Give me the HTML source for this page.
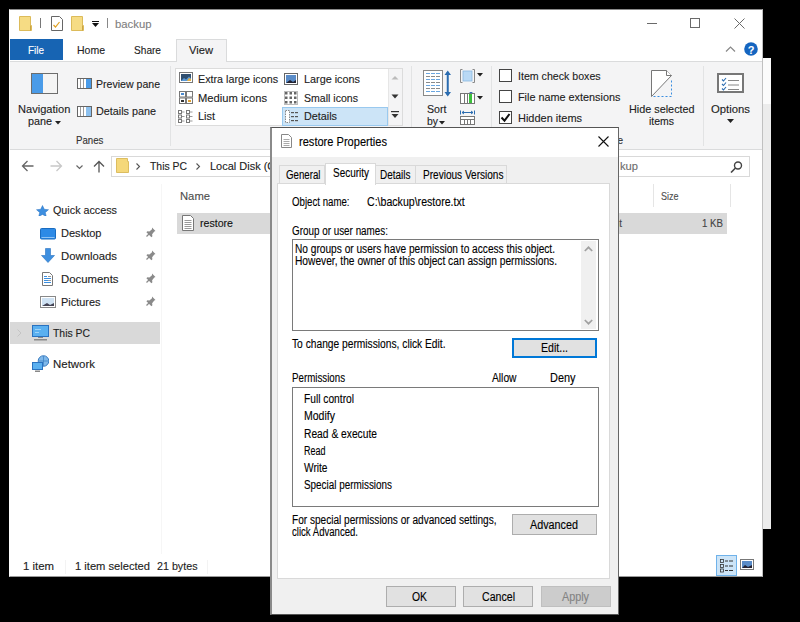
<!DOCTYPE html>
<html><head><meta charset="utf-8"><style>
html,body{margin:0;padding:0;}
body{width:800px;height:622px;background:#000;position:relative;overflow:hidden;font-family:"Liberation Sans",sans-serif;}
div{position:absolute;}
.t{white-space:nowrap;line-height:0;height:0;transform-origin:0 0;-webkit-text-stroke:0.12px currentColor;}
</style></head><body>
<div style="left:762px;top:58px;width:9px;height:471px;background:#ececec;border-left:1px solid #b8b8b8;box-sizing:border-box"></div>
<div style="left:763px;top:58px;width:8px;height:46px;background:#fbfbfb"></div>
<div style="left:9px;top:9px;width:754px;height:568px;background:#fff;border:1px solid #fdfdfd;border-top-color:#8a8a8a;border-right-color:#c0c0c0;border-bottom-color:#9a9a9a;box-sizing:border-box"></div>
<svg style="position:absolute;left:19px;top:16px;" width="14" height="15" viewBox="0 0 14 15"><path d="M0.5 0.5H11.5V9.5H12.5V14.5H0.5z" fill="#f6dc84" stroke="#dcbb5a"/><path d="M11.5 9.5v5" stroke="#c9a445"/></svg>
<div style="left:40px;top:18px;width:1px;height:10px;background:#777"></div>
<svg style="position:absolute;left:51px;top:16px;" width="12" height="15" viewBox="0 0 12 15"><path d="M0.5 0.5h8l3 3v11h-11z" fill="#fff" stroke="#666"/><path d="M2.5 9l2 2 4-5" fill="none" stroke="#e0a020" stroke-width="1.2"/></svg>
<svg style="position:absolute;left:71px;top:16px;" width="14" height="15" viewBox="0 0 14 15"><path d="M0.5 0.5H11.5V9.5H12.5V14.5H0.5z" fill="#f6dc84" stroke="#dcbb5a"/><path d="M11.5 9.5v5" stroke="#c9a445"/></svg>
<svg style="position:absolute;left:92px;top:21px;" width="7" height="6" viewBox="0 0 7 6"><rect x="0" y="0" width="7" height="1" fill="#111"/><path d="M0 2h7l-3.5 4z" fill="#111"/></svg>
<div style="left:107px;top:18px;width:1px;height:10px;background:#888"></div>
<div class="t" style="left:115px;top:24.02px;font-size:11.5px;color:#808080;transform:scaleX(0.9843);">backup</div>
<div style="left:647px;top:23px;width:10px;height:1px;background:#6a6a6a"></div>
<div style="left:690px;top:18px;width:10px;height:10px;border:1px solid #6a6a6a;box-sizing:border-box"></div>
<svg style="position:absolute;left:734px;top:18px;" width="11" height="11" viewBox="0 0 11 11"><path d="M0.5 0.5l10 10M10.5 0.5l-10 10" stroke="#6a6a6a" stroke-width="1"/></svg>
<div style="left:10px;top:61px;width:752px;height:1px;background:#dadbdc"></div>
<div style="left:10px;top:39px;width:53px;height:21px;background:#1764b3"></div>
<div class="t" style="left:28px;top:50.02px;font-size:11.5px;color:#fff;transform:scaleX(0.8634);">File</div>
<div class="t" style="left:77px;top:50.02px;font-size:11.5px;color:#222;transform:scaleX(0.9128);">Home</div>
<div class="t" style="left:134px;top:50.02px;font-size:11.5px;color:#222;transform:scaleX(0.8798);">Share</div>
<div style="left:176px;top:39px;width:51px;height:23px;background:#f4f4f5;border:1px solid #dadbdc;border-bottom:none;box-sizing:border-box"></div>
<div class="t" style="left:189px;top:50.02px;font-size:11.5px;color:#222;transform:scaleX(0.9709);">View</div>
<svg style="position:absolute;left:725px;top:46px;" width="11" height="7" viewBox="0 0 11 7"><path d="M1 5.5l4.5-4.5 4.5 4.5" fill="none" stroke="#888" stroke-width="1.2"/></svg>
<svg style="position:absolute;left:744px;top:42px;" width="14" height="14" viewBox="0 0 14 14"><circle cx="7" cy="7" r="6.8" fill="#1565c0"/><text x="7" y="11.5" font-family="Liberation Sans" font-weight="bold" font-size="11" fill="#fff" text-anchor="middle">?</text></svg>
<div style="left:10px;top:62px;width:752px;height:87px;background:#f4f4f5"></div>
<div style="left:10px;top:149px;width:752px;height:1px;background:#dadbdc"></div>
<svg style="position:absolute;left:31px;top:73px;" width="27" height="21" viewBox="0 0 27 21"><rect x="0.5" y="0.5" width="26" height="20" fill="#fff" stroke="#6d6d6d"/><rect x="1" y="1" width="11" height="19" fill="#4a9be8"/><rect x="12" y="1" width="14" height="19" fill="#f4f4f4"/></svg>
<div class="t" style="left:18px;top:109.02px;font-size:11.5px;color:#222;transform:scaleX(0.9643);">Navigation</div>
<div class="t" style="left:28px;top:121.02px;font-size:11.5px;color:#222;transform:scaleX(0.9381);">pane</div>
<svg style="position:absolute;left:55px;top:121px;" width="6" height="4" viewBox="0 0 6 4"><path d="M0 0h6l-3 3.5z" fill="#222"/></svg>
<svg style="position:absolute;left:77px;top:78px;" width="15" height="11" viewBox="0 0 15 11"><rect x="0.5" y="0.5" width="14" height="10" fill="#fff" stroke="#666"/><rect x="3" y="1" width="1" height="9" fill="#999"/><rect x="6" y="1" width="1" height="9" fill="#999"/><rect x="9" y="1" width="5" height="9" fill="#4a9be8"/></svg>
<div class="t" style="left:96px;top:84.02px;font-size:11.5px;color:#222;transform:scaleX(0.9185);">Preview pane</div>
<svg style="position:absolute;left:77px;top:106px;" width="15" height="11" viewBox="0 0 15 11"><rect x="0.5" y="0.5" width="14" height="10" fill="#fff" stroke="#666"/><rect x="3" y="1" width="1" height="9" fill="#999"/><rect x="6" y="1" width="1" height="9" fill="#999"/><rect x="9" y="1" width="5" height="9" fill="#8cc0ee"/></svg>
<div class="t" style="left:96px;top:111.02px;font-size:11.5px;color:#222;transform:scaleX(0.9385);">Details pane</div>
<div class="t" style="left:76px;top:140.02px;font-size:11.5px;color:#333;transform:scaleX(0.8403);">Panes</div>
<div style="left:170px;top:66px;width:1px;height:80px;background:#e2e3e4"></div>
<div style="left:175px;top:68px;width:228px;height:58px;background:#fff;border:1px solid #dcdcdc;box-sizing:border-box"></div>
<div style="left:388px;top:69px;width:14px;height:56px;background:#f4f4f5;border-left:1px solid #e6e6e6;box-sizing:border-box"></div>
<svg style="position:absolute;left:391px;top:75px;" width="8" height="5" viewBox="0 0 8 5"><path d="M0.5 4.5l3.5-3.5 3.5 3.5z" fill="#bbb"/></svg>
<svg style="position:absolute;left:391px;top:94px;" width="8" height="5" viewBox="0 0 8 5"><path d="M0.5 0.5h7l-3.5 4z" fill="#333"/></svg>
<svg style="position:absolute;left:391px;top:111px;" width="8" height="8" viewBox="0 0 8 8"><rect x="0" y="0" width="8" height="1.2" fill="#333"/><path d="M0.5 3h7l-3.5 4z" fill="#333"/></svg>
<div style="left:282px;top:107px;width:106px;height:19px;background:#cce4f7;border:1px solid #99c9ef;box-sizing:border-box"></div>
<svg style="position:absolute;left:179px;top:72px;" width="14" height="11" viewBox="0 0 14 11"><rect x="0.5" y="0.5" width="13" height="10" fill="#fff" stroke="#777"/><rect x="2" y="2" width="10" height="7" fill="#2f4f70"/><path d="M2 9l3-3 2 1.5 3-3 2 2V9z" fill="#5a9ad8"/><path d="M8 9l2-3 2 1v2z" fill="#e8b040"/></svg>
<div class="t" style="left:198px;top:79.02px;font-size:11.5px;color:#222;transform:scaleX(0.9340);">Extra large icons</div>
<svg style="position:absolute;left:284px;top:73px;" width="14" height="12" viewBox="0 0 14 12"><rect x="0.5" y="0.5" width="13" height="11" fill="#fff" stroke="#666"/><rect x="2" y="2" width="10" height="8" fill="#5a8cc8"/><path d="M2 10l4-3 3 2 3-2v3z" fill="#223"/></svg>
<div class="t" style="left:304px;top:79.02px;font-size:11.5px;color:#222;transform:scaleX(0.9419);">Large icons</div>
<svg style="position:absolute;left:179px;top:91px;" width="14" height="13" viewBox="0 0 14 13"><rect x="0.5" y="0.5" width="6" height="5.5" fill="#fff" stroke="#777"/><rect x="7.5" y="0.5" width="6" height="5.5" fill="#fff" stroke="#777"/><rect x="0.5" y="7" width="6" height="5.5" fill="#fff" stroke="#777"/><rect x="7.5" y="7" width="6" height="5.5" fill="#fff" stroke="#777"/><rect x="2" y="2" width="3" height="2" fill="#4a8ad0"/><rect x="9" y="9" width="3" height="2" fill="#e0a030"/><rect x="2" y="9" width="3" height="2" fill="#333"/></svg>
<div class="t" style="left:198px;top:98.02px;font-size:11.5px;color:#222;transform:scaleX(0.9726);">Medium icons</div>
<svg style="position:absolute;left:284px;top:91px;" width="14" height="14" viewBox="0 0 14 14"><rect x="0.5" y="0.5" width="13" height="13" fill="#fff" stroke="#bbb"/><rect x="1.0" y="1.0" width="2.5" height="2.5" fill="#666"/><rect x="5.5" y="1.0" width="2.5" height="2.5" fill="#666"/><rect x="10.0" y="1.0" width="2.5" height="2.5" fill="#666"/><rect x="1.0" y="5.5" width="2.5" height="2.5" fill="#666"/><rect x="5.5" y="5.5" width="2.5" height="2.5" fill="#666"/><rect x="10.0" y="5.5" width="2.5" height="2.5" fill="#666"/><rect x="1.0" y="10.0" width="2.5" height="2.5" fill="#666"/><rect x="5.5" y="10.0" width="2.5" height="2.5" fill="#666"/><rect x="10.0" y="10.0" width="2.5" height="2.5" fill="#666"/></svg>
<div class="t" style="left:304px;top:98.02px;font-size:11.5px;color:#222;transform:scaleX(0.9184);">Small icons</div>
<svg style="position:absolute;left:178px;top:110px;" width="16" height="14" viewBox="0 0 16 14"><rect x="0.5" y="0.5" width="3" height="3" fill="#fff" stroke="#777"/><path d="M4 2.0h2.5" stroke="#999"/><rect x="0.5" y="5.0" width="3" height="3" fill="#fff" stroke="#777"/><path d="M4 6.5h2.5" stroke="#999"/><rect x="0.5" y="9.5" width="3" height="3" fill="#fff" stroke="#777"/><path d="M4 11.0h2.5" stroke="#999"/><rect x="8.5" y="0.5" width="3" height="3" fill="#fff" stroke="#777"/><path d="M12 2.0h2.5" stroke="#999"/><rect x="8.5" y="5.0" width="3" height="3" fill="#fff" stroke="#777"/><path d="M12 6.5h2.5" stroke="#999"/><rect x="8.5" y="9.5" width="3" height="3" fill="#fff" stroke="#777"/><path d="M12 11.0h2.5" stroke="#999"/></svg>
<div class="t" style="left:198px;top:116.02px;font-size:11.5px;color:#222;transform:scaleX(0.9499);">List</div>
<svg style="position:absolute;left:285px;top:110px;" width="13" height="13" viewBox="0 0 13 13"><rect x="0.5" y="0.5" width="4" height="12" fill="#fff" stroke="#888" stroke-dasharray="1.5 1"/><rect x="6" y="2" width="3" height="1.2" fill="#555"/><rect x="10" y="2" width="3" height="1.2" fill="#555"/><rect x="6" y="6" width="3" height="1.2" fill="#555"/><rect x="10" y="6" width="3" height="1.2" fill="#555"/><rect x="6" y="10" width="3" height="1.2" fill="#555"/><rect x="10" y="10" width="3" height="1.2" fill="#555"/></svg>
<div class="t" style="left:304px;top:116.02px;font-size:11.5px;color:#222;transform:scaleX(0.9388);">Details</div>
<div style="left:411px;top:66px;width:1px;height:80px;background:#e2e3e4"></div>
<svg style="position:absolute;left:423px;top:70px;" width="20" height="26" viewBox="0 0 20 26"><rect x="0.5" y="0.5" width="19" height="25" fill="#fff" stroke="#888"/><rect x="3" y="3" width="4" height="1" fill="#6aa6e0"/><rect x="8" y="3" width="4" height="1" fill="#6aa6e0"/><rect x="13" y="3" width="4" height="1" fill="#6aa6e0"/><rect x="3" y="6" width="4" height="1" fill="#8a8a8a"/><rect x="8" y="6" width="4" height="1" fill="#8a8a8a"/><rect x="13" y="6" width="4" height="1" fill="#8a8a8a"/><rect x="3" y="9" width="4" height="1" fill="#6aa6e0"/><rect x="8" y="9" width="4" height="1" fill="#6aa6e0"/><rect x="13" y="9" width="4" height="1" fill="#6aa6e0"/><rect x="3" y="12" width="4" height="1" fill="#8a8a8a"/><rect x="8" y="12" width="4" height="1" fill="#8a8a8a"/><rect x="13" y="12" width="4" height="1" fill="#8a8a8a"/><rect x="3" y="15" width="4" height="1" fill="#6aa6e0"/><rect x="8" y="15" width="4" height="1" fill="#6aa6e0"/><rect x="13" y="15" width="4" height="1" fill="#6aa6e0"/><rect x="3" y="18" width="4" height="1" fill="#8a8a8a"/><rect x="8" y="18" width="4" height="1" fill="#8a8a8a"/><rect x="13" y="18" width="4" height="1" fill="#8a8a8a"/><rect x="3" y="21" width="4" height="1" fill="#6aa6e0"/><rect x="8" y="21" width="4" height="1" fill="#6aa6e0"/><rect x="13" y="21" width="4" height="1" fill="#6aa6e0"/></svg>
<svg style="position:absolute;left:444px;top:70px;" width="7" height="27" viewBox="0 0 7 27"><rect x="2.75" y="2" width="2" height="23" fill="#2b6cb0"/><path d="M0.5 5l3.25-4.5 3.25 4.5zM0.5 22l3.25 4.5 3.25-4.5z" fill="#2b6cb0"/></svg>
<div class="t" style="left:427px;top:109.02px;font-size:11.5px;color:#222;transform:scaleX(0.9246);">Sort</div>
<div class="t" style="left:427px;top:121.02px;font-size:11.5px;color:#222;transform:scaleX(0.9057);">by</div>
<svg style="position:absolute;left:439px;top:121px;" width="6" height="4" viewBox="0 0 6 4"><path d="M0 0h6l-3 3.5z" fill="#222"/></svg>
<svg style="position:absolute;left:460px;top:69px;" width="15" height="14" viewBox="0 0 15 14"><path d="M2.5 0.5h-2v13h2M12.5 0.5h2v13h-2" fill="none" stroke="#888"/><rect x="3" y="2" width="9" height="10" fill="#b9d9f5" stroke="#8ab8e0" stroke-width="0.8"/></svg>
<svg style="position:absolute;left:477px;top:73px;" width="6" height="4" viewBox="0 0 6 4"><path d="M0 0h6l-3 3.5z" fill="#222"/></svg>
<svg style="position:absolute;left:460px;top:92px;" width="15" height="12" viewBox="0 0 15 12"><rect x="0.5" y="1.5" width="14" height="10" fill="#fff" stroke="#777"/><rect x="4" y="2" width="1" height="9" fill="#777"/><rect x="7" y="2" width="1" height="9" fill="#777"/><rect x="9" y="2" width="3" height="9" fill="#3cc03c"/><path d="M9 0h4l-2 1.5z" fill="#2b6cb0"/></svg>
<svg style="position:absolute;left:477px;top:96px;" width="6" height="4" viewBox="0 0 6 4"><path d="M0 0h6l-3 3.5z" fill="#222"/></svg>
<svg style="position:absolute;left:460px;top:110px;" width="15" height="15" viewBox="0 0 15 15"><path d="M0.5 0.5v4M14.5 0.5v4M2 2.5h11M2 2.5l2-1.5M2 2.5l2 1.5M13 2.5l-2-1.5M13 2.5l-2 1.5" fill="none" stroke="#2b6cb0" stroke-width="1"/><rect x="0.5" y="6.5" width="14" height="8" fill="#fff" stroke="#777"/><path d="M0.5 9.5h14M4.5 9.5v5M7.5 9.5v5M10.5 9.5v5" stroke="#777"/></svg>
<div style="left:491px;top:66px;width:1px;height:80px;background:#e2e3e4"></div>
<div style="left:499px;top:69px;width:13px;height:13px;background:#fff;border:1px solid #444;box-sizing:border-box"></div>
<div class="t" style="left:518px;top:76.02px;font-size:11.5px;color:#222;transform:scaleX(0.9231);">Item check boxes</div>
<div style="left:499px;top:90px;width:13px;height:13px;background:#fff;border:1px solid #444;box-sizing:border-box"></div>
<div class="t" style="left:518px;top:97.02px;font-size:11.5px;color:#222;transform:scaleX(0.9423);">File name extensions</div>
<div style="left:499px;top:111px;width:13px;height:13px;background:#fff;border:1px solid #444;box-sizing:border-box"></div>
<svg style="position:absolute;left:499px;top:111px;" width="13" height="13" viewBox="0 0 13 13"><path d="M2.5 6.5l3 3.2 5-6.7" fill="none" stroke="#111" stroke-width="2"/></svg>
<div class="t" style="left:518px;top:118.02px;font-size:11.5px;color:#222;transform:scaleX(0.9536);">Hidden items</div>
<svg style="position:absolute;left:651px;top:70px;" width="22" height="28" viewBox="0 0 22 28"><path d="M0.5 26.5V0.5H15.5L20.5 5.5z" fill="#fff" stroke="#777"/><path d="M15.5 0.5v5h5" fill="#fff" stroke="#777"/><path d="M2.5 26.5H20.5V9" fill="none" stroke="#3a8ee0" stroke-dasharray="2 2"/></svg>
<div class="t" style="left:629px;top:109.02px;font-size:11.5px;color:#222;transform:scaleX(0.9414);">Hide selected</div>
<div class="t" style="left:649px;top:121.02px;font-size:11.5px;color:#222;transform:scaleX(0.9099);">items</div>
<div style="left:703px;top:66px;width:1px;height:80px;background:#e2e3e4"></div>
<div class="t" style="left:576px;top:140.02px;font-size:11.5px;color:#333;transform:scaleX(0.8752);">Show/hide</div>
<svg style="position:absolute;left:717px;top:73px;" width="27" height="20" viewBox="0 0 27 20"><rect x="1" y="1" width="25" height="18" fill="#fff" stroke="#777" stroke-width="2"/><path d="M5 6.5l1.5 1.5 2.5-3M5 11l1.5 1.5 2.5-3M5 15.5l1.5 1.5 2.5-3" fill="none" stroke="#2b6cb0" stroke-width="1.1"/><path d="M11 7.5h11M11 12h11M11 16.5h11" stroke="#888"/></svg>
<div class="t" style="left:711px;top:109.02px;font-size:11.5px;color:#222;transform:scaleX(0.9840);">Options</div>
<svg style="position:absolute;left:727px;top:119px;" width="7" height="4" viewBox="0 0 7 4"><path d="M0 0h7l-3.5 4z" fill="#222"/></svg>
<svg style="position:absolute;left:21px;top:160px;" width="13" height="12" viewBox="0 0 13 12"><path d="M12.5 6H1.5M6.5 1L1.5 6l5 5" fill="none" stroke="#666" stroke-width="1.3"/></svg>
<svg style="position:absolute;left:50px;top:160px;" width="13" height="12" viewBox="0 0 13 12"><path d="M0.5 6h11M6.5 1l5 5-5 5" fill="none" stroke="#c8c8c8" stroke-width="1.3"/></svg>
<svg style="position:absolute;left:76px;top:165px;" width="7" height="5" viewBox="0 0 7 5"><path d="M0.5 0.5l3 3 3-3" fill="none" stroke="#666" stroke-width="1.2"/></svg>
<svg style="position:absolute;left:93px;top:160px;" width="12" height="13" viewBox="0 0 12 13"><path d="M6 12.5V1.5M1 6.5l5-5 5 5" fill="none" stroke="#555" stroke-width="1.3"/></svg>
<div style="left:111px;top:156px;width:200px;height:21px;background:#fff;border:1px solid #d9d9d9;box-sizing:border-box"></div>
<svg style="position:absolute;left:116px;top:158px;" width="13" height="15" viewBox="0 0 13 15"><path d="M0.5 0.5h11v3h1v11H0.5z" fill="#f5d87a" stroke="#dcbd60"/></svg>
<svg style="position:absolute;left:136px;top:163px;" width="5" height="7" viewBox="0 0 5 7"><path d="M0.5 0.5l3 3-3 3" fill="none" stroke="#555" stroke-width="1.1"/></svg>
<div class="t" style="left:150px;top:166.02px;font-size:11.5px;color:#222;transform:scaleX(0.9047);">This PC</div>
<svg style="position:absolute;left:196px;top:163px;" width="5" height="7" viewBox="0 0 5 7"><path d="M0.5 0.5l3 3-3 3" fill="none" stroke="#555" stroke-width="1.1"/></svg>
<div class="t" style="left:210px;top:166.02px;font-size:11.5px;color:#222;transform:scaleX(0.9549);">Local Disk (C:)</div>
<div style="left:560px;top:156px;width:190px;height:21px;background:#fff;border:1px solid #d9d9d9;box-sizing:border-box"></div>
<div class="t" style="left:620px;top:166.02px;font-size:11.5px;color:#6d6d6d;transform:scaleX(0.9708);">kup</div>
<svg style="position:absolute;left:730px;top:161px;" width="13" height="12" viewBox="0 0 13 12"><circle cx="8" cy="4.5" r="3.5" fill="none" stroke="#444" stroke-width="1.4"/><path d="M5.5 7L1 11.5" stroke="#444" stroke-width="1.6"/></svg>
<svg style="position:absolute;left:35px;top:205px;" width="14" height="11" viewBox="0 0 14 11"><path d="M7.5 0.5l1.8 3.8 4.2.4-3.2 2.8 1 4.1-3.8-2.2-3.8 2.2 1-4.1-3.2-2.8 4.2-.4z" fill="#3d8fe0" stroke="#2a72c0" stroke-width="0.5"/></svg>
<div class="t" style="left:53px;top:210.02px;font-size:11.5px;color:#222;transform:scaleX(0.9359);">Quick access</div>
<div class="t" style="left:61px;top:233.02px;font-size:11.5px;color:#222;transform:scaleX(0.9600);">Desktop</div>
<svg style="position:absolute;left:146px;top:227px;" width="10" height="11" viewBox="0 0 10 11"><path d="M6 0.5l3.5 3.5-1.2 0.6-2.2 2.6 0.3 2-1 1-5-5 1-1 2 .3 2.6-2.2z" fill="#8a8a8a"/><path d="M3 7L0.5 9.5" stroke="#8a8a8a" stroke-width="1.2"/></svg>
<div class="t" style="left:61px;top:256.02px;font-size:11.5px;color:#222;transform:scaleX(0.9843);">Downloads</div>
<svg style="position:absolute;left:146px;top:250px;" width="10" height="11" viewBox="0 0 10 11"><path d="M6 0.5l3.5 3.5-1.2 0.6-2.2 2.6 0.3 2-1 1-5-5 1-1 2 .3 2.6-2.2z" fill="#8a8a8a"/><path d="M3 7L0.5 9.5" stroke="#8a8a8a" stroke-width="1.2"/></svg>
<div class="t" style="left:61px;top:279.02px;font-size:11.5px;color:#222;transform:scaleX(0.9886);">Documents</div>
<svg style="position:absolute;left:146px;top:273px;" width="10" height="11" viewBox="0 0 10 11"><path d="M6 0.5l3.5 3.5-1.2 0.6-2.2 2.6 0.3 2-1 1-5-5 1-1 2 .3 2.6-2.2z" fill="#8a8a8a"/><path d="M3 7L0.5 9.5" stroke="#8a8a8a" stroke-width="1.2"/></svg>
<div class="t" style="left:61px;top:302.02px;font-size:11.5px;color:#222;transform:scaleX(0.9509);">Pictures</div>
<svg style="position:absolute;left:146px;top:296px;" width="10" height="11" viewBox="0 0 10 11"><path d="M6 0.5l3.5 3.5-1.2 0.6-2.2 2.6 0.3 2-1 1-5-5 1-1 2 .3 2.6-2.2z" fill="#8a8a8a"/><path d="M3 7L0.5 9.5" stroke="#8a8a8a" stroke-width="1.2"/></svg>
<svg style="position:absolute;left:40px;top:228px;" width="16" height="12" viewBox="0 0 16 12"><rect x="0.5" y="0.5" width="15" height="10.5" rx="1" fill="#2d8ae6" stroke="#1a6cc0"/><rect x="1.5" y="9" width="13" height="1" fill="#8fc3f5"/></svg>
<svg style="position:absolute;left:41px;top:248px;" width="14" height="15" viewBox="0 0 14 15"><path d="M4.5 0.5h5v7h4l-6.5 7-6.5-7h4z" fill="#3d8fe0" stroke="#2a72c0" stroke-width="0.6"/></svg>
<svg style="position:absolute;left:42px;top:272px;" width="11" height="14" viewBox="0 0 11 14"><path d="M0.5 0.5h7l3 3v10h-10z" fill="#fff" stroke="#777"/><path d="M2 4.5h3M2 6.5h7M2 8.5h7M2 10.5h7" stroke="#3a8ee0"/><path d="M6 4.5h3M6 8.5h3" stroke="#999"/></svg>
<svg style="position:absolute;left:40px;top:296px;" width="16" height="12" viewBox="0 0 16 12"><rect x="0.5" y="0.5" width="15" height="11" fill="#fff" stroke="#888"/><rect x="2" y="2" width="12" height="8" fill="#cfe2f3"/><path d="M2 10l5-3 3 2 4-2v3z" fill="#445"/></svg>
<div style="left:10px;top:322px;width:150px;height:22px;background:#d9d9d9"></div>
<svg style="position:absolute;left:32px;top:325px;" width="17" height="17" viewBox="0 0 17 17"><rect x="0.5" y="0.5" width="16" height="11" fill="#5ab0f0" stroke="#2a72c0"/><path d="M3 4.5h6M3 7.5h4" stroke="#9fd3f8"/><rect x="6" y="12" width="5" height="1" fill="#888"/><rect x="2" y="14" width="13" height="1.5" fill="#8a8a8a"/></svg>
<div class="t" style="left:53px;top:333.02px;font-size:11.5px;color:#222;transform:scaleX(0.9047);">This PC</div>
<svg style="position:absolute;left:17px;top:329px;" width="5" height="8" viewBox="0 0 5 8"><path d="M0.5 0.5l3.5 3.5-3.5 3.5" fill="none" stroke="#c4c4c4" stroke-width="1"/></svg>
<svg style="position:absolute;left:32px;top:355px;" width="17" height="18" viewBox="0 0 17 18"><circle cx="11.5" cy="6" r="5.3" fill="#7fb8ea" stroke="#3a7cc0"/><path d="M7 6h9M11.5 1v10" stroke="#3a7cc0" stroke-width="0.7"/><rect x="0.5" y="7.5" width="10" height="7" fill="#5ab0f0" stroke="#2a72c0"/><rect x="3" y="15.5" width="5" height="1.5" fill="#888"/></svg>
<div class="t" style="left:53px;top:364.02px;font-size:11.5px;color:#222;transform:scaleX(0.9958);">Network</div>
<div style="left:161px;top:184px;width:1px;height:370px;background:#f6f6f6"></div>
<div class="t" style="left:180px;top:196.02px;font-size:11.5px;color:#4d4d4d;transform:scaleX(0.9780);">Name</div>
<div style="left:653px;top:184px;width:1px;height:23px;background:#e5e5e5"></div>
<div style="left:730px;top:184px;width:1px;height:23px;background:#e5e5e5"></div>
<div class="t" style="left:661px;top:196.02px;font-size:11.5px;color:#4d4d4d;transform:scaleX(0.7823);">Size</div>
<div style="left:177px;top:213px;width:550px;height:21px;background:#d9d9d9"></div>
<svg style="position:absolute;left:182px;top:215px;" width="12" height="16" viewBox="0 0 12 16"><path d="M0.5 0.5h8l3 3v12h-11z" fill="#fff" stroke="#777"/><path d="M2.5 5.5h7M2.5 7.5h7M2.5 9.5h7M2.5 11.5h7M2.5 13.5h7" stroke="#999"/></svg>
<div class="t" style="left:200px;top:223.02px;font-size:11.5px;color:#111;transform:scaleX(0.9220);">restore</div>
<div class="t" style="left:556px;top:223.02px;font-size:11.5px;color:#444;transform:scaleX(0.8605);">Text Document</div>
<div class="t" style="left:702px;top:223.02px;font-size:11.5px;color:#444;transform:scaleX(0.8423);">1 KB</div>
<div class="t" style="left:23px;top:566.02px;font-size:11.5px;color:#222;transform:scaleX(0.9899);">1 item</div>
<div style="left:65px;top:560px;width:1px;height:14px;background:#f3f3f3"></div>
<div class="t" style="left:75px;top:566.02px;font-size:11.5px;color:#222;transform:scaleX(0.9697);">1 item selected</div>
<div class="t" style="left:157px;top:566.02px;font-size:11.5px;color:#222;transform:scaleX(0.9316);">21 bytes</div>
<div style="left:207px;top:560px;width:1px;height:14px;background:#f3f3f3"></div>
<div style="left:716px;top:555px;width:21px;height:21px;background:#cce4f7;border:1px solid #6fb2ea;box-sizing:border-box"></div>
<svg style="position:absolute;left:719px;top:558px;" width="15" height="15" viewBox="0 0 15 15"><rect x="1.5" y="1.5" width="3" height="3" fill="none" stroke="#333" stroke-width="0.8"/><rect x="1.5" y="6.5" width="3" height="3" fill="none" stroke="#333" stroke-width="0.8"/><rect x="1.5" y="11" width="3" height="3" fill="none" stroke="#333" stroke-width="0.8"/><path d="M6 3h3M10 3h4M6 8h3M10 8h4M6 12.5h3M10 12.5h4" stroke="#333"/></svg>
<svg style="position:absolute;left:740px;top:559px;" width="14" height="11" viewBox="0 0 14 11"><rect x="0.5" y="0.5" width="13" height="10" fill="#fff" stroke="#777"/><rect x="2" y="2" width="10" height="7" fill="#5a8cc8"/><path d="M2 9l3-3 3 2 4-2v3z" fill="#223"/></svg>
<div style="left:270px;top:127px;width:349px;height:488px;background:#f0f0f0;border:1px solid #555;border-left:2px solid #8a8a8a;border-right-color:#666;box-sizing:border-box"></div>
<div style="left:272px;top:128px;width:346px;height:29px;background:#fff"></div>
<svg style="position:absolute;left:281px;top:134px;" width="11" height="14" viewBox="0 0 11 14"><path d="M0.5 0.5h7l3 3v10h-10z" fill="#fff" stroke="#888"/><path d="M2.5 5.5h6M2.5 7.5h6M2.5 9.5h6M2.5 11.5h6" stroke="#aaa"/></svg>
<div class="t" style="left:299px;top:141.84px;font-size:12px;color:#000;transform:scaleX(0.9227);">restore Properties</div>
<svg style="position:absolute;left:598px;top:136px;" width="11" height="11" viewBox="0 0 11 11"><path d="M0.5 0.5l10 10M10.5 0.5l-10 10" stroke="#111" stroke-width="1.1"/></svg>
<div style="left:277px;top:183px;width:333px;height:396px;background:#fff;border:1px solid #d9d9d9;box-sizing:border-box"></div>
<div style="left:279px;top:165px;width:46px;height:19px;background:#f0f0f0;border:1px solid #d9d9d9;box-sizing:border-box"></div>
<div style="left:375px;top:165px;width:41px;height:19px;background:#f0f0f0;border:1px solid #d9d9d9;box-sizing:border-box"></div>
<div style="left:415px;top:165px;width:92px;height:19px;background:#f0f0f0;border:1px solid #d9d9d9;box-sizing:border-box"></div>
<div style="left:325px;top:163px;width:51px;height:22px;background:#fff;border:1px solid #d9d9d9;border-bottom:none;box-sizing:border-box"></div>
<div class="t" style="left:286px;top:174.84px;font-size:12px;color:#000;transform:scaleX(0.8081);">General</div>
<div class="t" style="left:333px;top:172.84px;font-size:12px;color:#000;transform:scaleX(0.8305);">Security</div>
<div class="t" style="left:380px;top:174.84px;font-size:12px;color:#000;transform:scaleX(0.8315);">Details</div>
<div class="t" style="left:423px;top:174.84px;font-size:12px;color:#000;transform:scaleX(0.8381);">Previous Versions</div>
<div class="t" style="left:292px;top:201.84px;font-size:12px;color:#000;transform:scaleX(0.8057);">Object name:</div>
<div class="t" style="left:367px;top:201.84px;font-size:12px;color:#000;transform:scaleX(0.8825);">C:\backup\restore.txt</div>
<div class="t" style="left:292px;top:230.84px;font-size:12px;color:#000;transform:scaleX(0.8225);">Group or user names:</div>
<div style="left:292px;top:239px;width:307px;height:92px;background:#fff;border:1px solid #7a7a7a;box-sizing:border-box"></div>
<div style="left:581px;top:241px;width:15px;height:88px;background:#f0f0f0"></div>
<svg style="position:absolute;left:584px;top:246px;" width="9" height="6" viewBox="0 0 9 6"><path d="M0.8 5l3.7-3.7 3.7 3.7" fill="none" stroke="#a0a0a0" stroke-width="1.7"/></svg>
<svg style="position:absolute;left:584px;top:319px;" width="9" height="6" viewBox="0 0 9 6"><path d="M0.8 1l3.7 3.7 3.7-3.7" fill="none" stroke="#a0a0a0" stroke-width="1.7"/></svg>
<div class="t" style="left:295px;top:248.84px;font-size:12px;color:#000;transform:scaleX(0.8456);">No groups or users have permission to access this object.</div>
<div class="t" style="left:295px;top:260.84px;font-size:12px;color:#000;transform:scaleX(0.8502);">However, the owner of this object can assign permissions.</div>
<div class="t" style="left:292px;top:343.84px;font-size:12px;color:#000;transform:scaleX(0.8524);">To change permissions, click Edit.</div>
<div style="left:512px;top:338px;width:85px;height:20px;background:#e1e1e1;border:2px solid #0078d7;box-sizing:border-box"></div>
<div class="t" style="left:541px;top:347.84px;font-size:12px;color:#000;transform:scaleX(0.8801);">Edit...</div>
<div class="t" style="left:292px;top:377.84px;font-size:12px;color:#000;transform:scaleX(0.8110);">Permissions</div>
<div class="t" style="left:492px;top:377.84px;font-size:12px;color:#000;transform:scaleX(0.8544);">Allow</div>
<div class="t" style="left:550px;top:377.84px;font-size:12px;color:#000;transform:scaleX(0.9103);">Deny</div>
<div style="left:292px;top:387px;width:307px;height:120px;background:#fff;border:1px solid #7a7a7a;box-sizing:border-box"></div>
<div class="t" style="left:304px;top:398.84px;font-size:12px;color:#000;transform:scaleX(0.8520);">Full control</div>
<div class="t" style="left:304px;top:415.84px;font-size:12px;color:#000;transform:scaleX(0.8771);">Modify</div>
<div class="t" style="left:304px;top:433.84px;font-size:12px;color:#000;transform:scaleX(0.8549);">Read &amp; execute</div>
<div class="t" style="left:304px;top:450.84px;font-size:12px;color:#000;transform:scaleX(0.7495);">Read</div>
<div class="t" style="left:304px;top:467.84px;font-size:12px;color:#000;transform:scaleX(0.8459);">Write</div>
<div class="t" style="left:304px;top:484.84px;font-size:12px;color:#000;transform:scaleX(0.8247);">Special permissions</div>
<div class="t" style="left:292px;top:519.84px;font-size:12px;color:#000;transform:scaleX(0.8400);">For special permissions or advanced settings,</div>
<div class="t" style="left:292px;top:531.84px;font-size:12px;color:#000;transform:scaleX(0.7980);">click Advanced.</div>
<div style="left:512px;top:514px;width:85px;height:21px;background:#e1e1e1;border:1px solid #adadad;box-sizing:border-box"></div>
<div class="t" style="left:530px;top:524.84px;font-size:12px;color:#000;transform:scaleX(0.8993);">Advanced</div>
<div style="left:386px;top:586px;width:70px;height:21px;background:#e1e1e1;border:1px solid #adadad;box-sizing:border-box"></div>
<div class="t" style="left:412px;top:596.84px;font-size:12px;color:#000;transform:scaleX(0.8652);">OK</div>
<div style="left:463px;top:586px;width:70px;height:21px;background:#e1e1e1;border:1px solid #adadad;box-sizing:border-box"></div>
<div class="t" style="left:482px;top:596.84px;font-size:12px;color:#000;transform:scaleX(0.8834);">Cancel</div>
<div style="left:541px;top:586px;width:70px;height:21px;background:#cccccc;border:1px solid #bfbfbf;box-sizing:border-box"></div>
<div class="t" style="left:562px;top:596.84px;font-size:12px;color:#838383;transform:scaleX(0.8995);">Apply</div>
</body></html>
